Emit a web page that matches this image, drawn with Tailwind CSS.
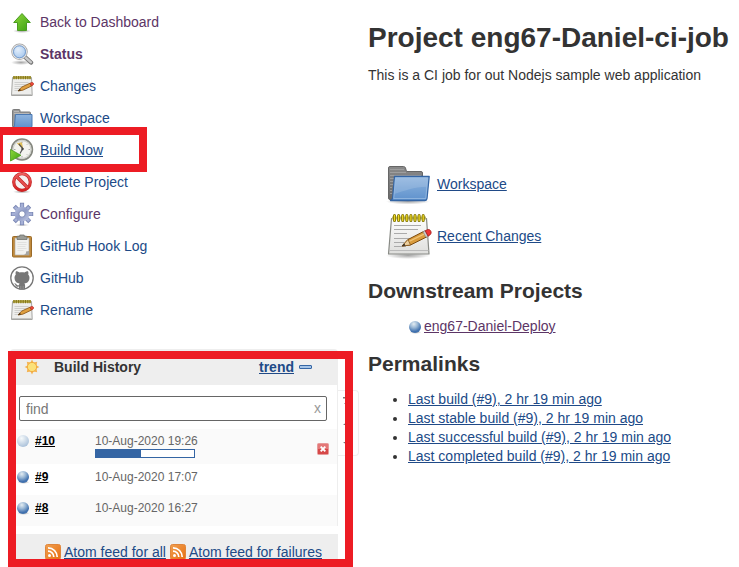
<!DOCTYPE html>
<html lang="en">
<head>
<meta charset="utf-8">
<meta name="viewport" content="width=device-width, initial-scale=1">
<title>eng67-Daniel-ci-job [Jenkins]</title>
<script src="https://cdn.jsdelivr.net/npm/@tailwindcss/browser@4"></script>
</head>
<body class="bg-white font-['Liberation_Sans',Arial,sans-serif] text-sm text-[#333]">
<svg class="absolute size-0" aria-hidden="true">
  <defs>
    <linearGradient id="green" x1="0" y1="0" x2="1" y2="1"><stop offset="0" stop-color="#8fd83c"/><stop offset="1" stop-color="#3aa010"/></linearGradient>
    <linearGradient id="blue" x1="0" y1="0" x2="0" y2="1"><stop offset="0" stop-color="#8fb4de"/><stop offset="1" stop-color="#5f92cd"/></linearGradient>
    <linearGradient id="grey" x1="0" y1="0" x2="0" y2="1"><stop offset="0" stop-color="#8a8a8a"/><stop offset="1" stop-color="#6a6a6a"/></linearGradient>
    <linearGradient id="paper" x1="0" y1="0" x2="0" y2="1"><stop offset="0" stop-color="#fdfdfd"/><stop offset="1" stop-color="#dededc"/></linearGradient>
    <linearGradient id="steel" x1="0" y1="0" x2="1" y2="1"><stop offset="0" stop-color="#b9c2e0"/><stop offset=".5" stop-color="#8f9bc6"/><stop offset="1" stop-color="#c3cae4"/></linearGradient>
    <linearGradient id="red" x1="0" y1="0" x2="0" y2="1"><stop offset="0" stop-color="#f06060"/><stop offset="1" stop-color="#d42020"/></linearGradient>
    <linearGradient id="orange" x1="0" y1="0" x2="1" y2="1"><stop offset="0" stop-color="#f0a050"/><stop offset="1" stop-color="#e86f12"/></linearGradient>
    <radialGradient id="ball" cx=".4" cy=".25" r=".8"><stop offset="0" stop-color="#e4edf2"/><stop offset=".4" stop-color="#98b6d4"/><stop offset=".8" stop-color="#3f70ae"/><stop offset="1" stop-color="#4a78b2"/></radialGradient>
    <radialGradient id="paleball" cx=".38" cy=".28" r=".75"><stop offset="0" stop-color="#f6fafb"/><stop offset=".5" stop-color="#d0ddea"/><stop offset="1" stop-color="#a9c0d9"/></radialGradient>
    <radialGradient id="lens" cx=".4" cy=".35" r=".7"><stop offset="0" stop-color="#e4effb"/><stop offset="1" stop-color="#9fc3ec"/></radialGradient>
    <radialGradient id="shade"><stop offset="0" stop-color="#000" stop-opacity=".35"/><stop offset="1" stop-color="#000" stop-opacity="0"/></radialGradient>
  </defs>
  <symbol id="i-up" viewBox="0 0 24 24">
    <ellipse cx="12" cy="21" rx="9" ry="2" fill="url(#shade)"/>
    <path d="M12 3.500 20.300 12.500H16.500V20.500H7.500V12.500H3.700Z" fill="url(#green)" stroke="#4a9c20" stroke-width="1" stroke-linejoin="round"/>
  </symbol>
  <symbol id="i-search" viewBox="0 0 24 24">
    <ellipse cx="11" cy="20.500" rx="10" ry="2.500" fill="url(#shade)"/>
    <path d="M15 15 21 20.500" stroke="#777" stroke-width="4.400" stroke-linecap="round"/>
    <path d="M15 15 21 20.300" stroke="#c9c9c9" stroke-width="2.400" stroke-linecap="round"/>
    <circle cx="9.500" cy="9.800" r="7.300" fill="url(#lens)" stroke="#a0a0a0" stroke-width="1.800"/>
    <circle cx="9.500" cy="9.800" r="6.900" fill="none" stroke="#e6e6e6" stroke-width="1.100"/>
    <circle cx="9.500" cy="9.800" r="6" fill="none" stroke="#6c96cc" stroke-width=".9"/>
  </symbol>
  <symbol id="i-note" viewBox="0 0 48 48">
    <ellipse cx="24" cy="43.500" rx="22" ry="3.500" fill="url(#shade)"/>
    <path d="M7.500 6.500h35L45 42H4.500Z" fill="url(#paper)" stroke="#888a85" stroke-width="1.200" stroke-linejoin="round"/>
    <path d="M5 38.500h39.500" stroke="#bbb"/>
    <path d="M10 13.500h27M10 17.500h24M10 21.500h13M10 26.500h23M10 30.500h10M10 34.500h12" stroke="#aaa" stroke-width="1.100"/>
    <path d="M8 6h34" stroke="#bcb76a" stroke-width="3"/>
    <path d="M10.500 3.500v5M14.600 3.500v5M18.700 3.500v5M22.800 3.500v5M26.900 3.500v5M31 3.500v5M35.100 3.500v5M39.200 3.500v5" stroke="#807300" stroke-width="3" stroke-linecap="round"/>
    <path d="M10.500 3.500v5M14.600 3.500v5M18.700 3.500v5M22.800 3.500v5M26.900 3.500v5M31 3.500v5M35.100 3.500v5M39.200 3.500v5" stroke="#edd825" stroke-width="1.300" stroke-linecap="round"/>
    <path d="m18 34 6-6.500L40.500 19l3 5.500L26.500 33Z" fill="#d99b3c" stroke="#7d4c10" stroke-width="1" stroke-linejoin="round"/>
    <path d="m25 29.500 16.500-8.200" stroke="#f0c478" stroke-width="1.300"/>
    <path d="m18 34 6-6.500 2.500 5.500Z" fill="#ecd0a0" stroke="#7d4c10" stroke-width=".7"/>
    <path d="m18 34 2.300-2.500 1 2Z" fill="#222"/>
    <path d="m39 19.800 2.200-1.100 3 5.500-2.200 1.100Z" fill="#ccc" stroke="#888" stroke-width=".6"/>
    <path d="m41.200 18.700 2.500-1.100c3-.8 4.600 3.400 2.400 5.200l-2 1.400Z" fill="#ef3535" stroke="#a01818" stroke-width=".8"/>
  </symbol>
  <symbol id="i-note-small" viewBox="0 0 24 24">
    <path d="M2.500 3.500h19l.7 18H1.500Z" fill="#eeeeec" stroke="#a5a5a2" stroke-linejoin="round"/>
    <path d="M2 20.500h20" stroke="#c4c4c2"/>
    <path d="M4.500 8.500h14M4.500 10.500h12M4.500 12.500h9M4.500 14.500h5M4.500 16.500h5" stroke="#cfcfcd"/>
    <path d="M3 3.500h18" stroke="#b3a544" stroke-width="2.600"/>
    <path d="M4 2v3.200M6.300 2v3.200M8.600 2v3.200M10.900 2v3.200M13.200 2v3.200M15.500 2v3.200M17.800 2v3.200M20 2v3.200" stroke="#857818" stroke-width="1.100"/>
    <path d="m8 17 3.500-3.800 8.500-4 1.500 2.800-8.700 4.200Z" fill="#e0a040" stroke="#8e5a1c" stroke-width=".9" stroke-linejoin="round"/>
    <path d="m8 17 2-2.200.8 1.700Z" fill="#3a2a18"/>
    <path d="m20 9.200 1.500-.7c1.800-.6 2.700 1.500 1.500 2.600l-1.500.9Z" fill="#ee4a3a" stroke="#b03020" stroke-width=".7"/>
  </symbol>
  <symbol id="i-folder" viewBox="0 0 48 48">
    <ellipse cx="24" cy="41.500" rx="22" ry="3" fill="url(#shade)"/>
    <path d="M4.500 38V8q0-1.500 1.500-1.500h13.500q1.500 0 2 1.500l1 3.500H37q1.500 0 1.500 1.500V38q0 1.500-1.500 1.500H6q-1.500 0-1.500-1.500Z" fill="url(#grey)" stroke="#666" stroke-width="1"/>
    <path d="M6 9.500h14M6 12.500h16M6 15.500h31M6 18.500h4M6 21.500h3M6 24.500h3M6 27.500h2M6 30.500h2M6 33.500h2" stroke="#a4a4a4" stroke-width=".8"/>
    <path d="M10.500 16.500h34.700L43 38.500q-.2 2-2 2H6.500q2-1 2.200-3Z" fill="url(#blue)" stroke="#3465a4" stroke-width="1.300" stroke-linejoin="round"/>
    <path d="M11.600 17.800h32l-1 9C30 27 20 31 10.300 34Z" fill="#fff" fill-opacity=".14"/>
    <path d="M11.500 17.800h32.200L41.800 38.500H9.700Z" fill="none" stroke="#9fc0e4" stroke-width=".7"/>
  </symbol>
  <symbol id="i-folder-small" viewBox="0 0 24 24">
    <path d="M2.500 20.500v-16q0-1 1-1h5.500q1 0 1 1v1.500h9.500q1 0 1 1v13.500Z" fill="#999" stroke="#7c7c7c"/>
    <path d="M4 5.500h5M4 7.500h15" stroke="#b8b8b8"/>
    <path d="M5.500 8.500H22v11.500q0 1.500-1.500 1.500H3q1.500-.5 1.500-2.500Z" fill="url(#blue)" stroke="#4a78b2" stroke-linejoin="round"/>
  </symbol>
  <symbol id="i-clock" viewBox="0 0 24 24">
    <circle cx="12" cy="11.500" r="10.300" fill="#f3f3ef" stroke="#85877f" stroke-width="1.800"/>
    <circle cx="12" cy="11.500" r="9" fill="none" stroke="#d0d2cc" stroke-width="1.300"/>
    <path d="M12 3.500v1.500M12 18v1.500M4 11.500h1.500M18.500 11.500H20M17.700 5.900l-.8.800M17.700 17.200l-.8-.8" stroke="#aaa"/>
    <path d="m7.500 5.500 4-.8 1.300 6.300Z" fill="#efcf5a" stroke="#d0a840" stroke-width=".7"/>
    <path d="m9 6 3.800 4.500-2.800 5" fill="none" stroke="#555" stroke-width="1.200"/>
    <circle cx="12.500" cy="11" r="1.200" fill="#444"/>
    <path d="M.5 11.500 11 17.300.5 23Z" fill="url(#green)" stroke="#4a9c20" stroke-width=".8" stroke-linejoin="round"/>
  </symbol>
  <symbol id="i-delete" viewBox="0 0 24 24">
    <ellipse cx="12" cy="21.800" rx="9" ry="1.700" fill="url(#shade)"/>
    <circle cx="12" cy="12" r="8.300" fill="#f6f0f0" stroke="#c02828" stroke-width="3.200"/>
    <path d="m6.500 6.500 11 11" stroke="#c02828" stroke-width="3.400"/>
    <circle cx="12" cy="12" r="8.300" fill="none" stroke="url(#red)" stroke-width="2"/>
    <path d="m6.300 6.300 11.400 11.400" stroke="#e65050" stroke-width="2"/>
  </symbol>
  <symbol id="i-gear" viewBox="0 0 24 24">
    <ellipse cx="12" cy="23" rx="8" ry="1" fill="url(#shade)"/>
    <g stroke="#7683b0" stroke-width="4.200"><path d="M12 .8v22.400M.8 12h22.400M4.300 4.300l15.400 15.400M19.700 4.300 4.300 19.700"/></g>
    <g stroke="#a5b0d6" stroke-width="2.800"><path d="M12 1.600v20.800M1.600 12h20.800M4.900 4.900l14.200 14.200M19.100 4.900 4.900 19.100"/></g>
    <circle cx="12" cy="12" r="7.300" fill="url(#steel)"/>
    <circle cx="12" cy="12" r="3.200" fill="#fff" stroke="#7683b0" stroke-width=".9"/>
  </symbol>
  <symbol id="i-clipboard" viewBox="0 0 24 24">
    <rect x="2.500" y="2.500" width="19" height="20.500" rx="1" fill="#c08a3c" stroke="#9a6a28"/>
    <path d="M5 4h14v17H5Z" fill="#f2f2f0" stroke="#aaa" stroke-width=".6"/>
    <path d="M7.500 8.500h9M7.500 10.500h9M7.500 12.500h8M7.500 14.500h9M7.500 16.500h6" stroke="#dcdcda" stroke-width=".8"/>
    <path d="M19 17v4h-5.500q3-.4 2.500-3.400Z" fill="#a5a5a3"/>
    <path d="M7 5.500V3q0-.8.800-.8h2V1h4.400v1.200h2q.8 0 .8.800v2.500Z" fill="#9a9c97" stroke="#72746f" stroke-width=".8"/>
  </symbol>
  <symbol id="i-github" viewBox="0 0 24 24">
    <circle cx="12" cy="12" r="11.200" fill="#fff" stroke="#777" stroke-width="1.300"/>
    <path d="M6 5.300c1.600 0 2.700.7 3.500 1.300 1.600-.4 3.400-.4 5 0 .8-.6 1.900-1.300 3.500-1.300.6 1.200.5 2.400.2 3.200 1.100 1.200 1.500 2.500 1.200 4.300-.5 3.300-2.500 4.300-5 4.700.6.700.7 1.400.7 2.300v3.100q-3.100 1-6.200 0v-2.300c-2.200.4-3-.5-3.500-1.700-.3-.7-.7-1.200-1.300-1.600 1.600-.3 2.100.7 2.700 1.500.5.600 1.200.7 2.200.4.100-.8.200-1.200.6-1.700-2.500-.4-4.500-1.400-5-4.700-.3-1.800.1-3.100 1.200-4.300-.3-.8-.4-2 .2-3.200Z" fill="#777"/>
    <path d="M10.800 20v3M13.200 20v3" stroke="#aaa" stroke-width=".5"/>
  </symbol>
  <symbol id="i-sun" viewBox="0 0 16 16">
    <path d="M8 .6 9.600 3.500 13.200 2.800 12.500 6.400 15.400 8 12.500 9.600 13.200 13.200 9.600 12.500 8 15.400 6.400 12.500 2.800 13.200 3.500 9.600.6 8 3.500 6.400 2.800 2.800 6.400 3.500Z" fill="#f4b455"/>
    <circle cx="8" cy="8" r="4.600" fill="#fbe17a" stroke="#f0a83c" stroke-width=".9"/>
  </symbol>
  <symbol id="i-ball" viewBox="0 0 14 14"><ellipse cx="7.500" cy="12.300" rx="6" ry="1.600" fill="url(#shade)"/><circle cx="7" cy="7" r="6" fill="url(#ball)"/></symbol>
  <symbol id="i-paleball" viewBox="0 0 14 14"><circle cx="7" cy="7" r="6" fill="url(#paleball)"/></symbol>
  <symbol id="i-stop" viewBox="0 0 12 12">
    <rect x=".5" y=".5" width="11" height="11" rx="1" fill="#e47878" stroke="#e79a9a"/>
    <path d="M1 6h10v5H1Z" fill="#d64848"/>
    <path d="m3.700 3.700 4.600 4.600m0-4.600L3.700 8.300" stroke="#fff" stroke-width="1.900"/>
  </symbol>
  <symbol id="i-feed" viewBox="0 0 16 16">
    <rect x=".5" y=".5" width="15" height="15" rx="2" fill="url(#orange)" stroke="#e0853a"/>
    <circle cx="4.500" cy="11.500" r="1.500" fill="#fff"/>
    <path d="M3 7.200A5.800 5.800 0 0 1 8.800 13M3 3.800A9.200 9.200 0 0 1 12.200 13" fill="none" stroke="#fff" stroke-width="1.700"/>
  </symbol>
</svg>

<div class="flex items-start">
  <aside class="w-[338px] shrink-0 pl-2.5 pt-1.5">
    <nav aria-label="Project" class="flex flex-col text-[#204a87]">
      <a href="#" class="flex h-8 items-center gap-1.5 text-[#5c3566]"><svg class="size-6"><use href="#i-up"/></svg>Back to Dashboard</a>
      <a href="#" class="flex h-8 items-center gap-1.5 font-bold text-[#5c3566]"><svg class="size-6"><use href="#i-search"/></svg>Status</a>
      <a href="#" class="flex h-8 items-center gap-1.5"><svg class="size-6"><use href="#i-note-small"/></svg>Changes</a>
      <a href="#" class="flex h-8 items-center gap-1.5"><svg class="size-6"><use href="#i-folder-small"/></svg>Workspace</a>
      <div class="relative">
        <a href="#" class="flex h-8 items-center gap-1.5 underline"><svg class="size-6"><use href="#i-clock"/></svg>Build Now</a>
        <div class="pointer-events-none absolute -top-[7px] -bottom-1.5 -left-2.5 w-[147px] border-8 border-l-3 border-[#ed1c24]"></div>
      </div>
      <a href="#" class="flex h-8 items-center gap-1.5"><svg class="size-6"><use href="#i-delete"/></svg>Delete Project</a>
      <a href="#" class="flex h-8 items-center gap-1.5 text-[#5c3566]"><svg class="size-6"><use href="#i-gear"/></svg>Configure</a>
      <a href="#" class="flex h-8 items-center gap-1.5"><svg class="size-6"><use href="#i-clipboard"/></svg>GitHub Hook Log</a>
      <a href="#" class="flex h-8 items-center gap-1.5"><svg class="size-6"><use href="#i-github"/></svg>GitHub</a>
      <a href="#" class="flex h-8 items-center gap-1.5"><svg class="size-6"><use href="#i-note-small"/></svg>Rename</a>
    </nav>

    <section aria-labelledby="history" class="relative mt-[23px]">
      <header class="flex h-9 items-center rounded-t bg-[#eee] pr-[26px] pl-3.5">
        <svg class="mr-3.5 size-4"><use href="#i-sun"/></svg>
        <h2 id="history" class="flex-1 font-bold">Build History</h2>
        <a href="#" class="mr-[5px] font-bold text-[#204a87] underline">trend</a>
        <button aria-label="Collapse" class="h-1 w-[13px] rounded-[1px] border border-[#3465a4] bg-[#a4c4e8]"></button>
      </header>
      <div class="border-r border-[#eee]">
        <div class="relative pt-[11px] pr-2.5 pb-2 pl-[9px]">
          <input type="text" aria-label="Find build" placeholder="find" class="block h-[25px] w-full rounded-[2px] border border-[#666] px-1.5 text-sm placeholder:text-[#777]">
          <button aria-label="Clear" class="absolute top-[13px] right-4 h-5 text-sm text-[#999]">x</button>
        </div>
        <table class="w-full border-collapse text-xs leading-4 text-[#666]">
          <tbody>
            <tr class="bg-[#fafafa] align-top">
              <td class="w-[85px] pt-1 pl-1.5"><div class="flex items-center gap-[5px]"><svg class="size-3.5"><use href="#i-paleball"/></svg><a href="#" class="font-bold text-black underline">#10</a></div></td>
              <td class="pt-1 pb-1.5">10-Aug-2020 19:26
                <div role="progressbar" aria-label="Build progress" aria-valuenow="46" class="h-[9px] w-[100px] border border-[#3465a4] bg-white"><div class="h-full bg-[#3465a4]" style="width:46%"></div></div>
              </td>
              <td class="w-5 pt-3.5"><button aria-label="Stop build" class="block"><svg class="size-3"><use href="#i-stop"/></svg></button></td>
            </tr>
            <tr class="h-[31px] align-top">
              <td class="pt-[5px] pl-1.5"><div class="flex items-center gap-[5px]"><svg class="size-3.5"><use href="#i-ball"/></svg><a href="#" class="font-bold text-black underline">#9</a></div></td>
              <td class="pt-[5px]">10-Aug-2020 17:07</td><td></td>
            </tr>
            <tr class="h-[31px] bg-[#fafafa] align-top">
              <td class="pt-[5px] pl-1.5"><div class="flex items-center gap-[5px]"><svg class="size-3.5"><use href="#i-ball"/></svg><a href="#" class="font-bold text-black underline">#8</a></div></td>
              <td class="pt-[5px]">10-Aug-2020 16:27</td><td></td>
            </tr>
          </tbody>
        </table>
      </div>
      <footer class="mt-2 flex h-[33px] items-center justify-end gap-1 bg-[#eee] pt-0.5 pr-4 text-[#204a87]">
        <a href="#" class="flex items-center gap-[3px] underline"><svg class="size-4"><use href="#i-feed"/></svg>Atom feed for all</a>
        <a href="#" class="flex items-center gap-[3px] underline"><svg class="size-4"><use href="#i-feed"/></svg>Atom feed for failures</a>
      </footer>
      <!-- Build paging controls, beside the history list -->
      <div class="absolute top-[41px] left-full flex h-[66px] w-[21px] flex-col items-center justify-between rounded-r border border-l-0 border-[#eee] pt-1.5 pb-2 text-[#777]">
        <svg class="h-2 w-2.5" viewBox="0 0 10 8"><path d="M0 0h10v1.500H0ZM5 3l4 4H1Z" fill="currentColor"/></svg>
        <svg class="h-1.5 w-2.5" viewBox="0 0 10 6"><path d="m5 1 5 4H0Z" fill="currentColor"/></svg>
        <svg class="h-1.5 w-2.5" viewBox="0 0 10 6"><path d="m5 5 5-4H0Z" fill="currentColor"/></svg>
      </div>
      <div class="pointer-events-none absolute top-0.5 -right-[15px] bottom-0 -left-0.5 border-8 border-[#ed1c24]"></div>
    </section>
  </aside>

  <main class="min-w-0 flex-1 pt-5 pl-[30px]">
    <h1 class="text-[28px] leading-9 font-bold whitespace-nowrap">Project eng67-Daniel-ci-job</h1>
    <p class="mt-2.5 leading-[19px]">This is a CI job for out Nodejs sample web application</p>
    <div class="mt-[75px] ml-4 flex flex-col items-start gap-1 text-[#204a87]">
      <a href="#" class="flex items-center gap-[5px] underline"><svg class="size-12"><use href="#i-folder"/></svg>Workspace</a>
      <a href="#" class="flex items-center gap-[5px] underline"><svg class="size-12"><use href="#i-note"/></svg>Recent Changes</a>
    </div>
    <h2 class="mt-[19px] text-[21px] leading-6 font-bold">Downstream Projects</h2>
    <ul class="mt-3.5 pl-10">
      <li><a href="#" class="flex items-center gap-0.5 leading-[19px] text-[#5c3566] underline"><svg class="size-3.5"><use href="#i-ball"/></svg>eng67-Daniel-Deploy</a></li>
    </ul>
    <h2 class="mt-4 text-[21px] leading-6 font-bold">Permalinks</h2>
    <ul class="mt-3.5 list-disc pl-10 leading-[19px]">
      <li><a href="#" class="text-[#204a87] underline">Last build (#9), 2 hr 19 min ago</a></li>
      <li><a href="#" class="text-[#204a87] underline">Last stable build (#9), 2 hr 19 min ago</a></li>
      <li><a href="#" class="text-[#204a87] underline">Last successful build (#9), 2 hr 19 min ago</a></li>
      <li><a href="#" class="text-[#204a87] underline">Last completed build (#9), 2 hr 19 min ago</a></li>
    </ul>
  </main>
</div>
</body>
</html>
